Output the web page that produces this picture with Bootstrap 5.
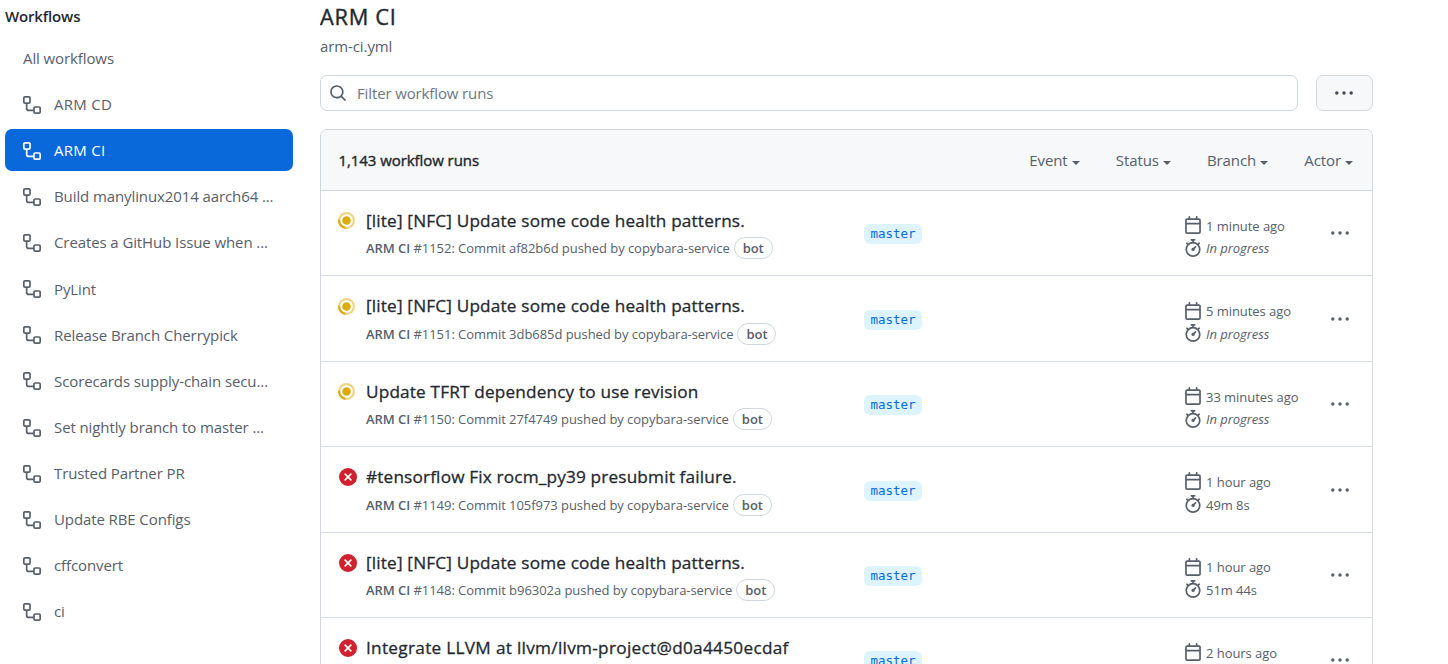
<!DOCTYPE html>
<html lang="en">
<head>
<meta charset="utf-8">
<title>ARM CI workflow runs</title>
<link rel="stylesheet" href="https://cdn.jsdelivr.net/npm/bootstrap@5.3.0/dist/css/bootstrap.min.css">
<style>
  body { font-family: "Open Sans", "Noto Sans", sans-serif; font-size: 15px; line-height: 24px; color: #24292f; height: 664px; overflow: hidden; letter-spacing: -.1px; }
  svg { fill: currentColor; flex: none; display: block; }
  .muted { color: #57606a; }
  .side { width: 288px; margin-left: 5px; padding-top: 4px; flex: none; }
  .side h2 { font-size: 15px; line-height: 24px; font-weight: 600; letter-spacing: -.15px; }
  .side .nav { gap: 4.12px; margin-top: 9px; }
  .side .nav-link { height: 42px; padding: 0 18px; gap: 13px; color: #57606a; border-radius: 7px; letter-spacing: -.1px; }
  .side .nav-link svg { margin-top: 1.4px; }
  .side .nav-link.active { background: #0969da; color: #fff; }
  .side .caps { letter-spacing: .3px; }
  .runs { width: 1053px; height: 664px; overflow: hidden; margin-left: 27px; flex: none; }
  .runs h1 { font-size: 21.8px; line-height: 34px; font-weight: 400; letter-spacing: .7px; -webkit-text-stroke: .4px; }
  .searchbar { gap: 18px; margin-top: 17px; }
  .filter { height: 36px; border: 1px solid #d0d7de; border-radius: 7px; padding-left: 8px; gap: 10px; color: #57606a; }
  .filter input { font-size: 15px; letter-spacing: -.13px; color: #57606a; }
  .filter input::placeholder { color: #6e7781; opacity: 1; }
  .more { width: 57px; height: 36px; background: #f6f8fa; border: 1px solid #d5d8db; border-radius: 7px; color: #424a53; padding: 0 2px 0 0; }
  .box { border: 1px solid #d0d7de; border-radius: 7px 7px 0 0; margin-top: 18px; }
  .box-head { height: 61px; background: #f6f8fa; border-bottom: 1px solid #d0d7de; padding: 0 19px 0 17.5px; border-radius: 6px 6px 0 0; }
  .count { font-weight: 400; -webkit-text-stroke: .4px; letter-spacing: -.07px; }
  .filters { gap: 36.2px; }
  .filters .dropdown-toggle::after { margin-left: 4px; border-top: 4.5px solid; border-left: 4.5px solid transparent; border-right: 4.5px solid transparent; vertical-align: 1.5px; }
  .run { display: grid; grid-template-columns: 27px 498px 320px 146px 1fr; height: 85.4px; padding-left: 18px; border-bottom: 1px solid #d8dee4; }
  .state { margin-top: 21.3px; }
  .state.spin { margin-left: -.7px; }
  .title { font-size: 17.2px; line-height: 26px; font-weight: 400; margin-top: 17px; letter-spacing: .17px; white-space: nowrap; -webkit-text-stroke: .3px; }
  .title.loose { letter-spacing: .3px; }
  .sub { font-size: 13px; line-height: 22px; margin-top: 3.4px; gap: 4px; white-space: nowrap; letter-spacing: -.05px; }
  .bot { border: 1px solid #d0d7de; border-radius: 12px; padding: 0 8px; height: 22px; line-height: 20px; font-weight: 600; }
  .branch { font: 12.5px/20px "DejaVu Sans Mono", monospace; letter-spacing: -.02px; color: #0969da; background: #ddf4ff; border-radius: 6px; padding: 0 6.5px; height: 20px; margin-top: 33.4px; justify-self: start; }
  .when { font-size: 13px; line-height: 22px; padding-top: 23.6px; letter-spacing: -.05px; }
  .when div { gap: 4px; height: 22.6px; }
  .when svg { margin-top: -1.4px; }
  .dots { margin-top: 33.4px; }
</style>
</head>
<body>
<svg width="0" height="0" class="position-absolute">
  <symbol id="flow" viewBox="0 0 16 16"><path d="M0 1.75C0 .784.784 0 1.75 0h3.5C6.216 0 7 .784 7 1.75v3.5A1.75 1.75 0 0 1 5.25 7H4v4a1 1 0 0 0 1 1h4v-1.25C9 9.784 9.784 9 10.75 9h3.5c.966 0 1.75.784 1.75 1.75v3.5A1.75 1.75 0 0 1 14.25 16h-3.5A1.75 1.75 0 0 1 9 14.25v-.75H5A2.5 2.5 0 0 1 2.5 11V7h-.75A1.75 1.75 0 0 1 0 5.25Zm1.75-.25a.25.25 0 0 0-.25.25v3.5c0 .138.112.25.25.25h3.5a.25.25 0 0 0 .25-.25v-3.5a.25.25 0 0 0-.25-.25Zm9 9a.25.25 0 0 0-.25.25v3.5c0 .138.112.25.25.25h3.5a.25.25 0 0 0 .25-.25v-3.5a.25.25 0 0 0-.25-.25Z"/></symbol>
  <symbol id="search" viewBox="0 0 16 16"><path d="M10.68 11.74a6 6 0 0 1-7.922-8.982 6 6 0 0 1 8.982 7.922l3.04 3.04a.749.749 0 0 1-.326 1.275.749.749 0 0 1-.734-.215ZM11.5 7a4.499 4.499 0 1 0-8.997 0A4.499 4.499 0 0 0 11.5 7Z"/></symbol>
  <symbol id="cal" viewBox="0 0 16 16"><path d="M4.75 0a.75.75 0 0 1 .75.75V2h5V.75a.75.75 0 0 1 1.5 0V2h1.25c.966 0 1.75.784 1.75 1.75v10.5A1.75 1.75 0 0 1 13.25 16H2.75A1.75 1.75 0 0 1 1 14.25V3.75C1 2.784 1.784 2 2.75 2H4V.75A.75.75 0 0 1 4.75 0ZM2.5 7.5v6.75c0 .138.112.25.25.25h10.5a.25.25 0 0 0 .25-.25V7.5Zm10.75-4H2.75a.25.25 0 0 0-.25.25V6h11V3.75a.25.25 0 0 0-.25-.25Z"/></symbol>
  <symbol id="watch" viewBox="0 0 16 16"><path d="M5.75.75A.75.75 0 0 1 6.5 0h3a.75.75 0 0 1 0 1.5h-.75v1l-.001.041a6.724 6.724 0 0 1 3.464 1.435l.007-.006.75-.75a.749.749 0 0 1 1.275.326.749.749 0 0 1-.215.734l-.75.75-.006.007a6.75 6.75 0 1 1-10.548 0L2.72 5.03l-.75-.75a.751.751 0 0 1 .018-1.042.751.751 0 0 1 1.042-.018l.75.75.007.006A6.72 6.72 0 0 1 7.25 2.541V1.5H6.5a.75.75 0 0 1-.75-.75ZM8 14.5a5.25 5.25 0 1 0-.001-10.501A5.25 5.25 0 0 0 8 14.5Zm.389-6.7 1.33-1.33a.75.75 0 1 1 1.061 1.06L9.45 8.861A1.503 1.503 0 0 1 8 10.75a1.499 1.499 0 1 1 .389-2.95Z"/></symbol>
  <symbol id="fail" viewBox="0 0 16 16"><path fill="#cf222e" d="M2.343 13.657A8 8 0 1 1 13.658 2.343 8 8 0 0 1 2.343 13.657ZM6.03 4.97a.751.751 0 0 0-1.042.018.751.751 0 0 0-.018 1.042L6.94 8 4.97 9.97a.749.749 0 0 0 .326 1.275.749.749 0 0 0 .734-.215L8 9.06l1.97 1.97a.749.749 0 0 0 1.275-.326.749.749 0 0 0-.215-.734L9.06 8l1.97-1.97a.749.749 0 0 0-.326-1.275.749.749 0 0 0-.734.215L8 6.94Z"/></symbol>
  <symbol id="busy" viewBox="0 0 16 16"><g fill="none" stroke="#dbab0a" stroke-width="2"><circle cx="8" cy="8" r="7" opacity=".5"/><path d="M1.05 7.2A7 7 0 0 0 7 14.9"/></g><circle cx="8" cy="8" r="4" fill="#dbab0a"/></symbol>
  <symbol id="kebab" viewBox="0 0 18 18"><circle cx="1.8" cy="9" r="1.7"/><circle cx="9" cy="9" r="1.7"/><circle cx="16.2" cy="9" r="1.7"/></symbol>
</svg>
<div class="d-flex">
  <aside class="side">
    <h2 class="mb-0">Workflows</h2>
    <nav class="nav flex-column flex-nowrap">
      <a class="nav-link d-flex align-items-center">All workflows</a>
      <a class="nav-link d-flex align-items-center"><svg width="18" height="18"><use href="#flow"/></svg><span class="caps">ARM CD</span></a>
      <a class="nav-link active d-flex align-items-center"><svg width="18" height="18"><use href="#flow"/></svg><span class="caps">ARM CI</span></a>
      <a class="nav-link d-flex align-items-center"><svg width="18" height="18"><use href="#flow"/></svg><span>Build manylinux2014 aarch64 ...</span></a>
      <a class="nav-link d-flex align-items-center"><svg width="18" height="18"><use href="#flow"/></svg><span>Creates a GitHub Issue when ...</span></a>
      <a class="nav-link d-flex align-items-center"><svg width="18" height="18"><use href="#flow"/></svg><span>PyLint</span></a>
      <a class="nav-link d-flex align-items-center"><svg width="18" height="18"><use href="#flow"/></svg><span>Release Branch Cherrypick</span></a>
      <a class="nav-link d-flex align-items-center"><svg width="18" height="18"><use href="#flow"/></svg><span>Scorecards supply-chain secu...</span></a>
      <a class="nav-link d-flex align-items-center"><svg width="18" height="18"><use href="#flow"/></svg><span>Set nightly branch to master ...</span></a>
      <a class="nav-link d-flex align-items-center"><svg width="18" height="18"><use href="#flow"/></svg><span>Trusted Partner PR</span></a>
      <a class="nav-link d-flex align-items-center"><svg width="18" height="18"><use href="#flow"/></svg><span>Update RBE Configs</span></a>
      <a class="nav-link d-flex align-items-center"><svg width="18" height="18"><use href="#flow"/></svg><span>cffconvert</span></a>
      <a class="nav-link d-flex align-items-center"><svg width="18" height="18"><use href="#flow"/></svg><span>ci</span></a>
    </nav>
  </aside>
  <main class="runs">
    <h1 class="mb-0">ARM CI</h1>
    <div class="muted">arm-ci.yml</div>
    <div class="searchbar d-flex">
      <div class="filter d-flex align-items-center flex-grow-1"><svg width="18" height="18"><use href="#search"/></svg><input class="form-control-plaintext p-0" placeholder="Filter workflow runs"></div>
      <button class="more d-flex align-items-center justify-content-center"><svg width="18" height="18"><use href="#kebab"/></svg></button>
    </div>
    <section class="box">
      <div class="box-head d-flex align-items-center justify-content-between">
        <span class="count">1,143 workflow runs</span>
        <div class="filters d-flex muted"><span class="dropdown-toggle">Event</span><span class="dropdown-toggle">Status</span><span class="dropdown-toggle">Branch</span><span class="dropdown-toggle">Actor</span></div>
      </div>
      <div class="run"><svg class="state spin" width="17" height="17"><use href="#busy"/></svg>
        <div><div class="title">[lite] [NFC] Update some code health patterns.</div><div class="sub d-flex muted"><span><b class="fw-semibold">ARM CI</b> #1152: Commit af82b6d pushed by copybara-service</span><span class="bot">bot</span></div></div>
        <span class="branch">master</span>
        <div class="when muted"><div class="d-flex align-items-center"><svg width="18" height="18"><use href="#cal"/></svg>1 minute ago</div><div class="d-flex align-items-center"><svg width="18" height="18"><use href="#watch"/></svg><i>In progress</i></div></div>
        <svg class="dots muted" width="20" height="18"><use href="#kebab"/></svg></div>
      <div class="run"><svg class="state spin" width="17" height="17"><use href="#busy"/></svg>
        <div><div class="title">[lite] [NFC] Update some code health patterns.</div><div class="sub d-flex muted"><span><b class="fw-semibold">ARM CI</b> #1151: Commit 3db685d pushed by copybara-service</span><span class="bot">bot</span></div></div>
        <span class="branch">master</span>
        <div class="when muted"><div class="d-flex align-items-center"><svg width="18" height="18"><use href="#cal"/></svg>5 minutes ago</div><div class="d-flex align-items-center"><svg width="18" height="18"><use href="#watch"/></svg><i>In progress</i></div></div>
        <svg class="dots muted" width="20" height="18"><use href="#kebab"/></svg></div>
      <div class="run"><svg class="state spin" width="17" height="17"><use href="#busy"/></svg>
        <div><div class="title">Update TFRT dependency to use revision</div><div class="sub d-flex muted"><span><b class="fw-semibold">ARM CI</b> #1150: Commit 27f4749 pushed by copybara-service</span><span class="bot">bot</span></div></div>
        <span class="branch">master</span>
        <div class="when muted"><div class="d-flex align-items-center"><svg width="18" height="18"><use href="#cal"/></svg>33 minutes ago</div><div class="d-flex align-items-center"><svg width="18" height="18"><use href="#watch"/></svg><i>In progress</i></div></div>
        <svg class="dots muted" width="20" height="18"><use href="#kebab"/></svg></div>
      <div class="run"><svg class="state" width="18" height="18"><use href="#fail"/></svg>
        <div><div class="title">#tensorflow Fix rocm_py39 presubmit failure.</div><div class="sub d-flex muted"><span><b class="fw-semibold">ARM CI</b> #1149: Commit 105f973 pushed by copybara-service</span><span class="bot">bot</span></div></div>
        <span class="branch">master</span>
        <div class="when muted"><div class="d-flex align-items-center"><svg width="18" height="18"><use href="#cal"/></svg>1 hour ago</div><div class="d-flex align-items-center"><svg width="18" height="18"><use href="#watch"/></svg>49m 8s</div></div>
        <svg class="dots muted" width="20" height="18"><use href="#kebab"/></svg></div>
      <div class="run"><svg class="state" width="18" height="18"><use href="#fail"/></svg>
        <div><div class="title">[lite] [NFC] Update some code health patterns.</div><div class="sub d-flex muted"><span><b class="fw-semibold">ARM CI</b> #1148: Commit b96302a pushed by copybara-service</span><span class="bot">bot</span></div></div>
        <span class="branch">master</span>
        <div class="when muted"><div class="d-flex align-items-center"><svg width="18" height="18"><use href="#cal"/></svg>1 hour ago</div><div class="d-flex align-items-center"><svg width="18" height="18"><use href="#watch"/></svg>51m 44s</div></div>
        <svg class="dots muted" width="20" height="18"><use href="#kebab"/></svg></div>
      <div class="run"><svg class="state" width="18" height="18"><use href="#fail"/></svg>
        <div><div class="title loose">Integrate LLVM at llvm/llvm-project@d0a4450ecdaf</div></div>
        <span class="branch">master</span>
        <div class="when muted"><div class="d-flex align-items-center"><svg width="18" height="18"><use href="#cal"/></svg>2 hours ago</div></div>
        <svg class="dots muted" width="20" height="18"><use href="#kebab"/></svg></div>
    </section>
  </main>
</div>
<script src="https://cdn.jsdelivr.net/npm/bootstrap@5.3.0/dist/js/bootstrap.bundle.min.js"></script>
</body>
</html>
